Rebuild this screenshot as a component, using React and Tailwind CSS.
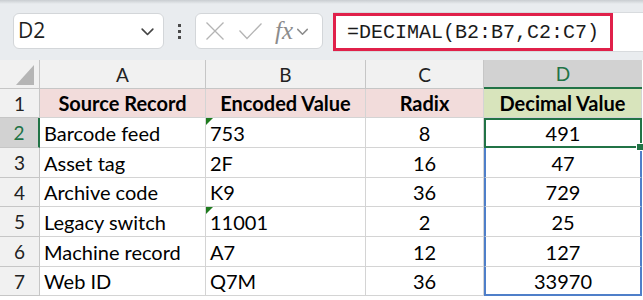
import React from 'react';

const rows = [
  { n: 2, a: 'Barcode feed', b: '753', c: '8', d: '491', flag: true, h: 'h-[30px]' },
  { n: 3, a: 'Asset tag', b: '2F', c: '16', d: '47', h: 'h-[30px]' },
  { n: 4, a: 'Archive code', b: 'K9', c: '36', d: '729', h: 'h-[29px]' },
  { n: 5, a: 'Legacy switch', b: '11001', c: '2', d: '25', flag: true, h: 'h-[30px]' },
  { n: 6, a: 'Machine record', b: 'A7', c: '12', d: '127', h: 'h-[30px]' },
  { n: 7, a: 'Web ID', b: 'Q7M', c: '36', d: '33970', h: 'h-[29px]' },
];

function Chevron({ className }) {
  return (
    <svg className={className} viewBox="0 0 16 16" fill="none" stroke="currentColor" strokeWidth="1.4">
      <path d="M3.5 6l4.5 4.5L12.5 6" strokeLinecap="round" strokeLinejoin="round" />
    </svg>
  );
}

function FormulaBar() {
  return (
    <div className="relative h-[60px] bg-[#e9ecef]">
      <div className="h-[4px] bg-gradient-to-b from-[#c9cdd1] to-[#e9ecef]" />
      <div className="flex items-start pt-[9px]">
        {/* name box */}
        <div className="ml-[13px] flex h-[36px] w-[151px] items-center justify-between rounded-[6px] border border-[#d3d6d9] bg-white pl-[4px] pr-[6px]">
          <span className="text-[21px] text-[#1f1f1f] [font-family:'Open_Sans',sans-serif]">D2</span>
          <Chevron className="h-[19px] w-[19px] text-[#444]" />
        </div>
        {/* dots */}
        <div className="ml-[14px] mt-[11px] flex w-[4px] flex-col gap-[3px]">
          <span className="h-[3px] w-[3px] bg-[#4a4a4a]" />
          <span className="h-[3px] w-[3px] bg-[#4a4a4a]" />
          <span className="h-[3px] w-[3px] bg-[#4a4a4a]" />
        </div>
        {/* fx box */}
        <div className="ml-[13px] flex h-[36px] w-[128px] items-center rounded-[6px] border border-[#d3d6d9] bg-white pl-[9px]">
          <svg className="h-[20px] w-[20px] text-[#b4b4b4]" viewBox="0 0 20 20" fill="none" stroke="currentColor" strokeWidth="1.3">
            <path d="M1.5 1.5l17 17M18.5 1.5l-17 17" />
          </svg>
          <svg className="ml-[13px] h-[18px] w-[25px] text-[#b4b4b4]" viewBox="0 0 25 18" fill="none" stroke="currentColor" strokeWidth="1.3">
            <path d="M1.5 8.5l7.5 8L23.5 1.5" />
          </svg>
          <span className="ml-[12px] mb-[2px] text-[25px] italic leading-none text-[#8c8c8c] [font-family:'Liberation_Serif',serif]">fx</span>
          <Chevron className="ml-[1px] h-[17px] w-[17px] text-[#8c8c8c]" />
        </div>
        {/* formula input */}
        <div className="ml-[10px] -mt-[1px] flex h-[40px] flex-1 items-stretch border-y border-[#d8dbde] bg-white">
          <div className="flex w-[280px] items-center border-[3px] border-[#e0204a] pl-[11px] pt-[2px]">
            <span className="text-[20px] text-[#1a1a1a] [font-family:'Liberation_Mono',monospace]">=DECIMAL(B2:B7,C2:C7)</span>
          </div>
        </div>
      </div>
    </div>
  );
}

export default function App() {
  const cell = 'border-r border-b border-[#d4d4d4] flex items-center';
  const hdr = 'border-r border-b border-[#c6c6c6] bg-[#f1f1f1] flex items-center justify-center text-[#222] text-[19px]';
  return (
    <div className="h-[300px] w-[643px] overflow-hidden bg-white [font-family:Lato,'Noto_Sans',sans-serif]">
      <FormulaBar />
      <div className="grid grid-cols-[40px_166px_160px_118px_158px] text-[20px] leading-none text-black">
        {/* column headers */}
        <div className="relative h-[29px] border-r border-b border-[#c6c6c6] bg-[#f1f1f1]">
          <svg className="absolute right-[5px] bottom-[3px] h-[20px] w-[18px]" viewBox="0 0 18 20">
            <path d="M18 0V20H0Z" fill="#b5b5b5" />
          </svg>
        </div>
        <div className={`${hdr} h-[29px]`}>A</div>
        <div className={`${hdr} h-[29px]`}>B</div>
        <div className={`${hdr} h-[29px]`}>C</div>
        <div className="flex h-[29px] items-center justify-center border-b-2 border-[#217346] bg-[#d2d2d2] text-[19px] text-[#217346]">D</div>

        {/* row 1 */}
        <div className={`${hdr} h-[29px]`}>1</div>
        <div className={`${cell} h-[29px] justify-center bg-[#f2dcdb] font-bold`}>Source Record</div>
        <div className={`${cell} h-[29px] justify-center bg-[#f2dcdb] font-bold`}>Encoded Value</div>
        <div className={`${cell} h-[29px] justify-center bg-[#f2dcdb] font-bold`}>Radix</div>
        <div className={`${cell} h-[29px] justify-center bg-[#d8e4bc] font-bold`}>Decimal Value</div>

        {rows.map((r, i) => {
          const last = i === rows.length - 1;
          return (
            <React.Fragment key={r.n}>
              <div
                className={`${r.h} flex items-center justify-center border-b text-[19px] ${
                  r.n === 2
                    ? 'border-r-2 border-r-[#217346] border-b-[#c6c6c6] bg-[#d2d2d2] text-[#217346]'
                    : 'border-r border-[#c6c6c6] bg-[#f1f1f1] text-[#222]'
                }`}
              >
                {r.n}
              </div>
              <div className={`${cell} ${r.h} pl-[4px]`}>{r.a}</div>
              <div className={`${cell} ${r.h} relative pl-[4px]`}>
                {r.flag && (
                  <svg className="absolute left-0 top-0 h-[7px] w-[7px]" viewBox="0 0 7 7">
                    <path d="M0 0H7L0 7Z" fill="#1e7b1e" />
                  </svg>
                )}
                {r.b}
              </div>
              <div className={`${cell} ${r.h} justify-center`}>{r.c}</div>
              <div
                className={`${r.h} relative flex items-center justify-center ${
                  r.n === 2
                    ? 'z-10 border-2 border-[#217346]'
                    : `border-x-2 border-x-[#4f7fc9] ${last ? 'border-b-2 border-b-[#4f7fc9]' : 'border-b border-b-[#d4d4d4]'}`
                }`}
              >
                {r.d}
                {r.n === 2 && (
                  <span className="absolute -right-[4px] -bottom-[5px] h-[8px] w-[8px] border border-white bg-[#217346]" />
                )}
              </div>
            </React.Fragment>
          );
        })}
      </div>
    </div>
  );
}
